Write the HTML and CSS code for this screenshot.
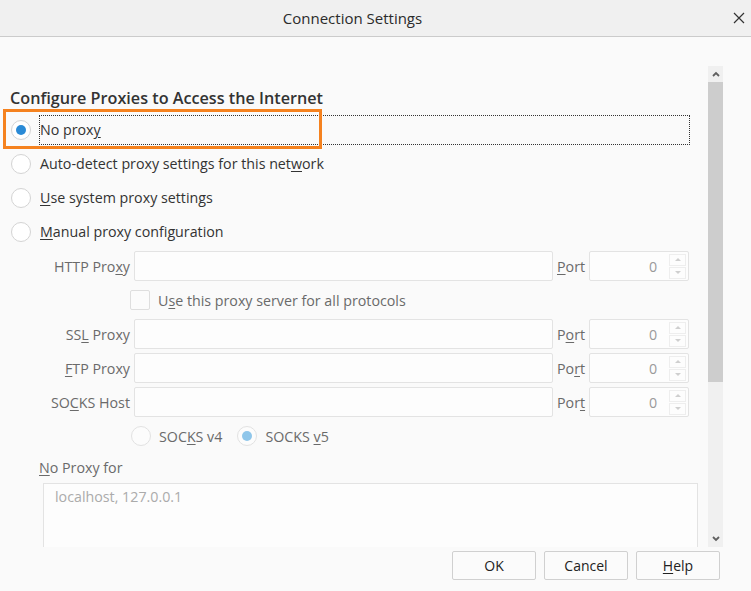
FILE: index.html
```html
<!DOCTYPE html>
<html lang="en">
<head>
<meta charset="utf-8">
<title>Connection Settings</title>
<link rel="stylesheet" href="styles.css">
</head>
<body>
<div class="window">
  <header class="titlebar">
    <span class="title">Connection Settings</span>
    <span class="close" aria-label="Close">
      <svg width="12" height="12" viewBox="0 0 12 12"><path d="M1 1 L11 11 M11 1 L1 11" stroke="#333" stroke-width="1.2" fill="none"/></svg>
    </span>
  </header>

  <div class="main">
    <div class="pane">
      <div class="scroller">
        <h1 class="heading">Configure Proxies to Access the Internet</h1>

        <div class="choice">
          <span class="radio on"></span>
          <span class="choice-label focus">No prox<u>y</u></span>
        </div>
        <div class="choice">
          <span class="radio"></span>
          <span class="choice-label">Auto-detect proxy settings for this net<u>w</u>ork</span>
        </div>
        <div class="choice">
          <span class="radio"></span>
          <span class="choice-label"><u>U</u>se system proxy settings</span>
        </div>
        <div class="choice">
          <span class="radio"></span>
          <span class="choice-label"><u>M</u>anual proxy configuration</span>
        </div>

        <div class="proxy-grid">
          <span class="field-label">HTTP Pro<u>x</u>y</span>
          <span class="field"></span>
          <span class="port-label"><u>P</u>ort</span>
          <span class="field port"><span class="port-value">0</span><span class="spin"><span><i class="up"></i></span><span><i class="down"></i></span></span></span>

          <div class="check-row">
            <span class="check"></span>
            <span class="dim">U<u>s</u>e this proxy server for all protocols</span>
          </div>

          <span class="field-label">SS<u>L</u> Proxy</span>
          <span class="field"></span>
          <span class="port-label">P<u>o</u>rt</span>
          <span class="field port"><span class="port-value">0</span><span class="spin"><span><i class="up"></i></span><span><i class="down"></i></span></span></span>

          <span class="field-label"><u>F</u>TP Proxy</span>
          <span class="field"></span>
          <span class="port-label">Po<u>r</u>t</span>
          <span class="field port"><span class="port-value">0</span><span class="spin"><span><i class="up"></i></span><span><i class="down"></i></span></span></span>

          <span class="field-label">SO<u>C</u>KS Host</span>
          <span class="field"></span>
          <span class="port-label">Por<u>t</u></span>
          <span class="field port"><span class="port-value">0</span><span class="spin"><span><i class="up"></i></span><span><i class="down"></i></span></span></span>

          <div class="socks-row">
            <span class="radio dis"></span>
            <span class="dim socks-v4">SOC<u>K</u>S v4</span>
            <span class="radio dis on-dis"></span>
            <span class="dim">SOCKS <u>v</u>5</span>
          </div>
        </div>

        <div class="noproxy-label"><u>N</u>o Proxy for</div>
        <div class="textarea">localhost, 127.0.0.1</div>
      </div>

      <div class="scrollbar">
        <span class="sb-btn">
          <svg width="8" height="6" viewBox="0 0 8 6"><path d="M1 5 L4 2 L7 5" stroke="#606060" stroke-width="1.8" fill="none"/></svg>
        </span>
        <span class="sb-thumb"></span>
        <span class="sb-track"></span>
        <span class="sb-btn">
          <svg width="8" height="6" viewBox="0 0 8 6"><path d="M1 1 L4 4 L7 1" stroke="#606060" stroke-width="1.8" fill="none"/></svg>
        </span>
      </div>
    </div>
  </div>

  <footer class="footer">
    <button class="btn">OK</button>
    <button class="btn">Cancel</button>
    <button class="btn"><u>H</u>elp</button>
  </footer>

  <div class="highlight"></div>
</div>
</body>
</html>
```

FILE: styles.css
```css
* { box-sizing: border-box; }
html, body { margin: 0; padding: 0; }
body {
  width: 751px;
  height: 591px;
  overflow: hidden;
  background: #fafafa;
  font-family: "Open Sans", "Noto Sans", sans-serif;
  font-size: 14.25px;
  color: #333;
}
u { text-decoration: underline; text-underline-offset: 2px; }

.window {
  position: relative;
  display: flex;
  flex-direction: column;
  height: 591px;
}

/* title bar */
.titlebar {
  flex: none;
  height: 37px;
  background: #f0f0f0;
  border-bottom: 1px solid #cbcbcb;
  display: flex;
  align-items: center;
}
.title {
  flex: 1;
  text-align: center;
  padding-right: 28px;
  font-size: 15px;
  color: #2b2b2b;
}
.close {
  width: 12px;
  height: 12px;
  margin-right: 6px;
  display: flex;
}

/* main */
.main {
  flex: 1;
  padding-top: 29px;
}
.pane {
  height: 481px;
  display: flex;
  padding-right: 28px;
}
.scroller {
  flex: 1;
  overflow: hidden;
  padding-top: 21px;
}
.heading {
  margin: 0 0 4px;
  padding-left: 10px;
  font-size: 16.2px;
  font-weight: 600;
  line-height: 22px;
  color: #333;
}

.choice {
  height: 34px;
  display: flex;
  align-items: center;
  padding-left: 11px;
}
.radio {
  flex: none;
  width: 20px;
  height: 20px;
  border-radius: 50%;
  border: 1px solid #d4d4d4;
  background: #fff;
  margin-right: 8px;
  display: flex;
  align-items: center;
  justify-content: center;
}
.radio.on::after {
  content: "";
  width: 10px;
  height: 10px;
  border-radius: 50%;
  background: #2a8ad6;
}
.radio.dis {
  border-color: #e2e2e2;
  background: #fcfcfc;
}
.radio.on-dis::after {
  content: "";
  width: 10px;
  height: 10px;
  border-radius: 50%;
  background: #8fc6ea;
}
.choice-label {
  line-height: 28px;
  border: 1px dotted transparent;
  padding-left: 0;
  color: #333;
}
.choice-label.focus {
  flex: 1;
  margin-right: 18px;
  border-color: #333;
}

/* manual proxy grid */
.proxy-grid {
  display: grid;
  grid-template-columns: 130px 419px max-content 100px;
  justify-content: start;
  grid-auto-rows: 30px;
  column-gap: 4px;
  row-gap: 4px;
  align-items: center;
  margin-top: 2px;
  color: #6a6a6a;
}
.field-label { text-align: right; }
.field {
  height: 30px;
  border: 1px solid #e3e3e3;
  border-radius: 2px;
  background: #fdfdfd;
}
.port {
  display: flex;
  align-items: center;
  justify-content: flex-end;
  padding: 2px;
}
.port-value {
  margin-right: 12px;
  color: #9a9a9a;
}
.spin {
  width: 17px;
  height: 25px;
  display: flex;
  flex-direction: column;
  gap: 1px;
}
.spin span {
  flex: 1;
  border: 1px solid #eeeeee;
  display: flex;
  align-items: center;
  justify-content: center;
}
.spin i {
  width: 0;
  height: 0;
  border-left: 3px solid transparent;
  border-right: 3px solid transparent;
}
.spin i.up { border-bottom: 3px solid #cfcfcf; }
.spin i.down { border-top: 3px solid #cfcfcf; }

.check-row {
  grid-column: 2 / -1;
  margin-left: -4px;
  display: flex;
  align-items: center;
}
.check {
  width: 20px;
  height: 20px;
  border: 1px solid #dedede;
  border-radius: 2px;
  background: #fbfbfb;
  margin-right: 8px;
}
.socks-row {
  grid-column: 2 / -1;
  margin-left: -3px;
  display: flex;
  align-items: center;
}
.socks-v4 { margin-right: 15px; }

.noproxy-label {
  margin-top: 4px;
  padding-left: 39px;
  line-height: 26px;
  color: #6a6a6a;
}
.textarea {
  margin: 2px 10px 0 43px;
  height: 120px;
  border: 1px solid #e3e3e3;
  background: #fdfdfd;
  padding: 3px 11px;
  line-height: 20px;
  color: #ababab;
}

/* scrollbar */
.scrollbar {
  flex: none;
  width: 15px;
  background: #f0f0f0;
  display: flex;
  flex-direction: column;
}
.sb-btn {
  height: 16px;
  display: flex;
  align-items: center;
  justify-content: center;
}
.sb-thumb {
  height: 300px;
  background: #cdcdcd;
}
.sb-track { flex: 1; }

/* footer */
.footer {
  flex: none;
  height: 44px;
  display: flex;
  justify-content: flex-end;
  align-items: flex-start;
  gap: 8px;
  padding: 4px 31px 0 0;
}
.btn {
  width: 84px;
  height: 29px;
  border: 1px solid #d0d0d0;
  border-radius: 2px;
  background: #fbfbfb;
  font-family: "Open Sans", "Noto Sans", sans-serif;
  font-size: 14px;
  color: #222;
  padding: 0;
}

/* annotation overlay */
.highlight {
  position: absolute;
  left: 3px;
  top: 109px;
  width: 319px;
  height: 40px;
  border: 3px solid #f5821f;
  pointer-events: none;
}
```
